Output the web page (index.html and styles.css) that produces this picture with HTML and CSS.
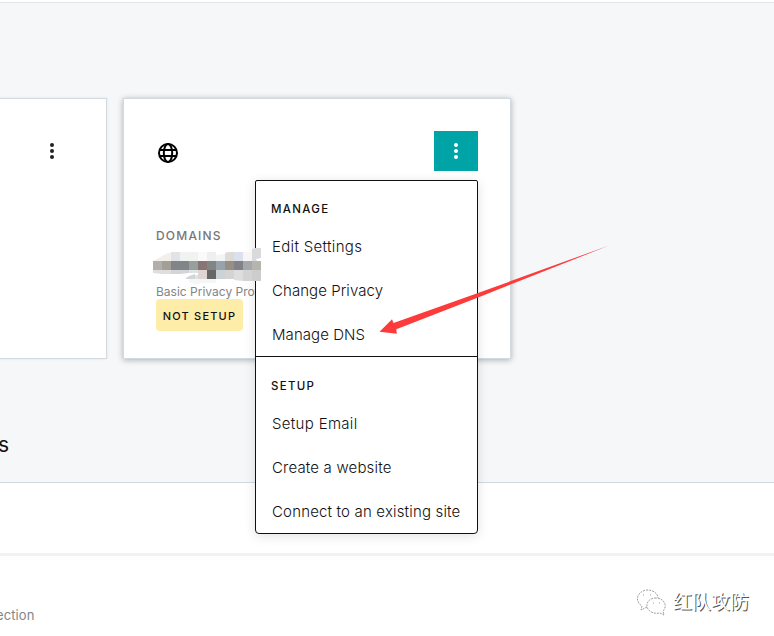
FILE: index.html
```html
<!DOCTYPE html>
<html lang="en">
<head>
<meta charset="utf-8">
<title>Domains</title>
<link rel="stylesheet" href="styles.css">
</head>
<body>
<main class="panel">
  <div class="cards">
    <section class="card card-previous">
      <svg class="dots" viewBox="0 0 6 18"><circle cx="3" cy="3" r="2"/><circle cx="3" cy="9" r="2"/><circle cx="3" cy="15" r="2"/></svg>
    </section>
    <section class="card card-domain">
      <div class="card-top">
        <svg class="globe" viewBox="0 0 22 22"><circle cx="11" cy="11" r="9"/><ellipse cx="11" cy="11" rx="4.2" ry="9"/><path d="M2.6 8h16.8M2.6 14h16.8"/></svg>
        <button class="more" aria-label="More"><svg class="dots" viewBox="0 0 6 18"><circle cx="3" cy="3" r="2"/><circle cx="3" cy="9" r="2"/><circle cx="3" cy="15" r="2"/></svg></button>
      </div>
      <div class="label"><span>DOMAINS</span></div>
      <div class="plan">Basic Privacy Prot</div>
      <div class="badge"><span>NOT SETUP</span></div>
      <nav class="menu">
        <div class="group">
          <h3>MANAGE</h3>
          <a class="wide">Edit Settings</a>
          <a>Change Privacy</a>
          <a>Manage DNS</a>
        </div>
        <div class="group">
          <h3>SETUP</h3>
          <a class="wide">Setup Email</a>
          <a class="medium">Create a website</a>
          <a class="medium">Connect to an existing site</a>
        </div>
      </nav>
      <svg class="mosaic" viewBox="0 0 108 36">
        <path fill="#f3f0eb" d="M0 13l9-5 6-3h3v8z"/>
        <path fill="#e2e3e8" d="M18 4h9v9h-9z"/>
        <path fill="#f1f3f1" d="M27 4h18v9H27z"/>
        <path fill="#fafafa" d="M45 4h9v9h-9z"/>
        <path fill="#eef0ef" d="M54 4h9v9h-9z"/>
        <path fill="#f3f4f4" d="M63 7l9-1v7h-9z"/>
        <path fill="#dedad6" d="M72 5l3-1h6v9h-9z"/>
        <path fill="#dae0ec" d="M81 4h9v9h-9z"/>
        <path fill="#f8f6f4" d="M90 4h9v9h-9z"/>
        <path fill="#d9dadc" d="M99 4V1l3-1h6v10l-5 1 1 2h-5z"/>
        <path fill="#b1aeab" d="M0 13h9v9H0z"/>
        <path fill="#a39f96" d="M9 13h9v9H9z"/>
        <path fill="#828588" d="M18 13h18v9H18z"/>
        <path fill="#97a09e" d="M36 13h9v9h-9z"/>
        <path fill="#897576" d="M45 13h9v9h-9z"/>
        <path fill="#828583" d="M54 13h9v9h-9z"/>
        <path fill="#97a2aa" d="M63 13h9v9h-9z"/>
        <path fill="#978e86" d="M72 13h9v9h-9z"/>
        <path fill="#818288" d="M81 13h9v9h-9z"/>
        <path fill="#a4a8ab" d="M90 13h9v9h-9z"/>
        <path fill="#b7b4ae" d="M99 13h9v9h-9z"/>
        <path fill="#dededd" d="M0 22h18v4H9l-9-1z"/>
        <path fill="#d4d5d8" d="M18 22h18v3l-9 1h-9zM33 30l3-2 6-2v5h-9z"/>
        <path fill="#dfe4e2" d="M36 22h9v3h-9zM42 27h3v4h-3z"/>
        <path fill="#f5f7f7" d="M36 31h27v4H47l-3 2-8-3z"/>
        <path fill="#dfd5d3" d="M45 22h9v9h-9z"/>
        <path fill="#666766" d="M54 22h9v9h-9z"/>
        <path fill="#cbd3d7" d="M63 22h9v9h-9z"/>
        <path fill="#d5d4d3" d="M72 22h9v9h-9z"/>
        <path fill="#dedede" d="M81 22h9v11l-9-1z"/>
        <path fill="#d3d3d3" d="M90 22h9v11h-9z"/>
        <path fill="#cdcdcd" d="M99 22h9v11h-9z"/>
      </svg>
    </section>
  </div>
  <h2 class="next-title">s</h2>
</main>
<div class="strip"></div>
<footer class="footer">
  <span class="footer-link">ection</span>
  <div class="watermark">
    <svg viewBox="0 0 30 28"><path d="M11 18l-6 3 1-4C-2 12 1 2 11 1c7 0 11 4 11 8M20 9c-6 0-10 4-9 9 2 6 9 7 13 6l4 2-1-4c5-5 1-13-7-13"/><path d="M7 6h1M14 6h1M17 14h1M23 14h1"/></svg>
    <span>红队攻防</span>
  </div>
</footer>
<svg class="arrow" viewBox="0 0 232 92"><path d="M231 .5L100 52.5 18.3 84.3l.5 4.5-17.3-2.1L14 74.3l1.5 3.6L100 48z"/></svg>
</body>
</html>
```
FILE: styles.css
```css
* { box-sizing: border-box; }
body { margin: 0; height: 636px; overflow: hidden; position: relative; background: #fff; font-family: Inter, "Liberation Sans", sans-serif; color: #111; padding-top: 2px; }
.panel { height: 481px; background: #f5f7f9; border-top: 1px solid #e4e4e6; border-bottom: 1px solid #cfdae3; padding-top: 95px; }
.cards { display: flex; gap: 17px; }
.card { height: 261px; background: #fff; border: 1px solid #d3dadf; }
.card-previous { width: 107px; border-left: 0; padding: 43px 0 0 49px; box-shadow: 0 0 3px rgba(0,0,0,.08); }
.dots { display: block; width: 6px; height: 18px; fill: #222; }
.card-domain { position: relative; width: 388px; margin-left: -1px; padding: 32px 32px 0; box-shadow: 0 1px 6px rgba(0,0,0,.3); }
.card-top { display: flex; justify-content: space-between; }
.globe { width: 22px; height: 22px; margin: 11px 0 0 1px; fill: none; stroke: #000; stroke-width: 2; }
.more { width: 44px; height: 40px; border: 0; padding: 0; background: #00a4a6; display: flex; justify-content: center; align-items: center; }
.more .dots { fill: #fff; }
.label { margin-top: 57px; height: 16px; line-height: 16px; font-size: 12px; font-weight: 500; letter-spacing: 1.2px; color: #767676; }
.plan { width: 99px; overflow: hidden; margin-top: 40px; height: 15px; line-height: 16px; font-size: 12px; color: #858585; white-space: nowrap; }
.badge { width: 87px; height: 32px; line-height: 34px; border-radius: 4px; background: #feeda8; text-align: center; font-size: 11px; font-weight: 500; letter-spacing: 1.2px; white-space: nowrap; }
.menu { position: absolute; left: 131px; top: 81px; width: 223px; height: 354px; background: #fff; border: 1px solid #111; border-radius: 2px 2px 4px 4px; box-shadow: 0 2px 12px rgba(0,0,0,.12); }
.group { height: 175px; padding: 18px 0 0 16px; }
.group + .group { height: 177px; padding-top: 19px; border-top: 1px solid #111; }
.group h3 { margin: 0 0 0 -1px; height: 20px; line-height: 20px; font-size: 11.5px; font-weight: 500; letter-spacing: 1.3px; }
.group a { display: block; height: 44px; line-height: 55px; font-size: 15px; font-weight: 300; letter-spacing: .07px; white-space: nowrap; }
.group .wide { letter-spacing: .32px; }
.group .medium { letter-spacing: .17px; }
.mosaic { position: absolute; left: 29px; top: 149px; width: 108px; height: 36px; }
.next-title { margin: 74px 0 0 -2px; font-size: 21px; line-height: 24px; font-weight: 400; }
.strip { height: 73px; border-bottom: 3px solid #f2f2f2; }
.footer { height: 80px; display: flex; justify-content: space-between; }
.footer-link { margin: 51px 0 0 -4px; font-size: 13px; line-height: 16px; letter-spacing: .1px; color: #858585; }
.watermark { display: flex; width: 138px; height: 28px; margin-top: 33px; gap: 6px; }
.watermark svg { width: 30px; height: 28px; fill: #fff; stroke: #777; stroke-width: .7; stroke-dasharray: 2 1; }
.watermark span { margin: -2px 0 0 1px; font: 19px/28px "Noto Sans CJK SC", sans-serif; color: #fff; text-shadow: 1px 1px 0 #555; white-space: nowrap; }
.arrow { position: absolute; left: 378px; top: 245px; width: 232px; height: 92px; fill: #fd3b3b; }
```
